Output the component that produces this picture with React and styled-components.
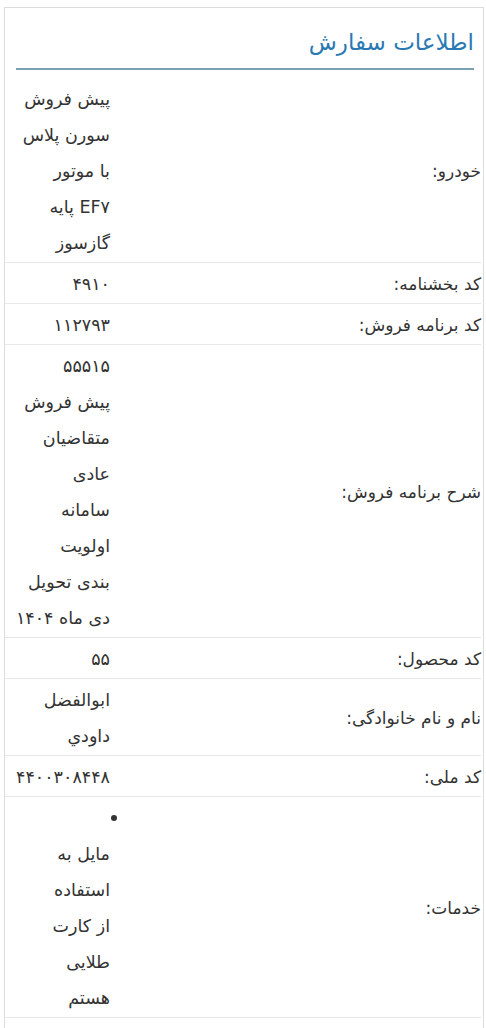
import React from 'react';
import styled, { createGlobalStyle } from 'styled-components';

const GlobalStyle = createGlobalStyle`
  html, body {
    margin: 0;
    padding: 0;
    background: #ffffff;
  }
  body {
    font-family: "DejaVu Sans", "Noto Sans", sans-serif;
    color: #333333;
  }
`;

const Card = styled.div`
  direction: rtl;
  margin: 7px 2px 0 4px;
  border: 1px solid #dcdcdc;
  border-bottom: none;
  background: #fff;
  min-height: 1021px;
  box-sizing: border-box;
`;

const CardHeader = styled.div`
  margin: 0 9px 0 11px;
  padding: 16px 0 8px;
  border-bottom: 2px solid #7ba0b1;
`;

const CardTitle = styled.h2`
  margin: 0;
  font-size: 23px;
  line-height: 36px;
  font-weight: 400;
  color: #2a79b3;
`;

const InfoTable = styled.div`
  margin: 8px 2px 0 0;
`;

const InfoRow = styled.div`
  display: grid;
  grid-template-columns: 1fr 105px;
  align-items: center;
  padding: 3px 0 1px;
  border-bottom: 1px solid #e8e8e8;
`;

const Label = styled.div`
  font-size: 17px;
  line-height: 36px;
  text-align: right;
`;

const Value = styled.div`
  font-size: 17.5px;
  line-height: 36px;
  text-align: right;
  white-space: nowrap;
`;

const ValueLine = styled.span`
  display: block;
`;

const ServiceList = styled.ul`
  margin: 0;
  padding: 0;
  list-style: none;
`;

const ServiceItem = styled.li`
  &::before {
    content: "";
    display: block;
    width: 6px;
    height: 6px;
    margin: 15px -7px 15px 0;
    border-radius: 50%;
    background: #333;
  }
`;

const rows = [
  { label: 'خودرو:', lines: ['پیش فروش', 'سورن پلاس', 'با موتور', 'EF۷ پایه', 'گازسوز'] },
  { label: 'کد بخشنامه:', lines: ['۴۹۱۰'] },
  { label: 'کد برنامه فروش:', lines: ['۱۱۲۷۹۳'] },
  {
    label: 'شرح برنامه فروش:',
    lines: ['۵۵۵۱۵', 'پیش فروش', 'متقاضیان', 'عادی', 'سامانه', 'اولویت', 'بندی تحویل', 'دی ماه ۱۴۰۴'],
  },
  { label: 'کد محصول:', lines: ['۵۵'] },
  { label: 'نام و نام خانوادگی:', lines: ['ابوالفضل', 'داودي'] },
  { label: 'کد ملی:', lines: ['۴۴۰۰۳۰۸۴۴۸'] },
];

const services = [['مایل به', 'استفاده', 'از کارت', 'طلایی', 'هستم']];

const App = () => {
  return (
    <>
      <GlobalStyle />
      <Card>
        <CardHeader>
          <CardTitle>اطلاعات سفارش</CardTitle>
        </CardHeader>
        <InfoTable>
          {rows.map((row) => (
            <InfoRow key={row.label}>
              <Label>{row.label}</Label>
              <Value>
                {row.lines.map((line, i) => (
                  <ValueLine key={i}>{line}</ValueLine>
                ))}
              </Value>
            </InfoRow>
          ))}
          <InfoRow>
            <Label>خدمات:</Label>
            <Value>
              <ServiceList>
                {services.map((item, i) => (
                  <ServiceItem key={i}>
                    {item.map((line, j) => (
                      <ValueLine key={j}>{line}</ValueLine>
                    ))}
                  </ServiceItem>
                ))}
              </ServiceList>
            </Value>
          </InfoRow>
        </InfoTable>
      </Card>
    </>
  );
};

export default App;
